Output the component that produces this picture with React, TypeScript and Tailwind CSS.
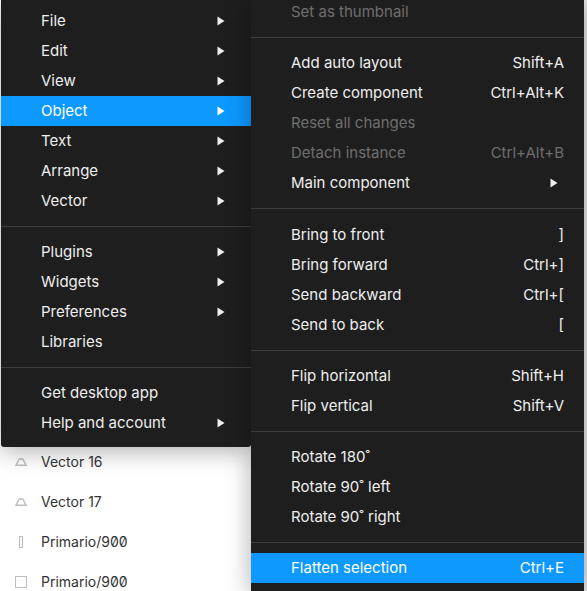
import { ReactNode } from "react";

type Item = { label: ReactNode; hint?: string; sub?: boolean; off?: boolean; active?: boolean };

const fileMenu: Item[][] = [
  [
    { label: "File", sub: true },
    { label: "Edit", sub: true },
    { label: "View", sub: true },
    { label: "Object", sub: true, active: true },
    { label: "Text", sub: true },
    { label: "Arrange", sub: true },
    { label: "Vector", sub: true },
  ],
  [
    { label: "Plugins", sub: true },
    { label: "Widgets", sub: true },
    { label: "Preferences", sub: true },
    { label: "Libraries" },
  ],
  [{ label: "Get desktop app" }, { label: "Help and account", sub: true }],
];

const objectMenu: Item[][] = [
  [{ label: "Set as thumbnail", off: true }],
  [
    { label: "Add auto layout", hint: "Shift+A" },
    { label: "Create component", hint: "Ctrl+Alt+K" },
    { label: "Reset all changes", off: true },
    { label: "Detach instance", hint: "Ctrl+Alt+B", off: true },
    { label: "Main component", sub: true },
  ],
  [
    { label: "Bring to front", hint: "]" },
    { label: "Bring forward", hint: "Ctrl+]" },
    { label: "Send backward", hint: "Ctrl+[" },
    { label: "Send to back", hint: "[" },
  ],
  [
    { label: "Flip horizontal", hint: "Shift+H" },
    { label: "Flip vertical", hint: "Shift+V" },
  ],
  [
    { label: "Rotate 180˚" },
    { label: "Rotate 90˚ left" },
    { label: "Rotate 90˚ right" },
  ],
  [{ label: "Flatten selection", hint: "Ctrl+E", active: true }],
];

const layers = [
  { name: "Vector 16", icon: "vector" },
  { name: "Vector 17", icon: "vector" },
  { name: "Primario/900", icon: "bar" },
  { name: "Primario/900", icon: "square" },
];

function Arrow() {
  return (
    <svg width="8" height="10" viewBox="0 0 8 10" className="mr-[6px] shrink-0">
      <path d="M0.5 0.5 L7.5 5 L0.5 9.5 Z" fill="currentColor" />
    </svg>
  );
}

function LayerIcon({ type }: { type: string }) {
  if (type === "vector") {
    return (
      <svg width="12" height="8" viewBox="0 0 12 8" fill="none" stroke="#bdbdbd" strokeWidth="1.4">
        <path d="M4.3 1 H7.7 L11 7.2 H1 Z" />
      </svg>
    );
  }
  if (type === "bar") return <div className="ml-1 h-3 w-1 border border-[#bdbdbd]" />;
  return <div className="size-3 border border-[#bdbdbd]" />;
}

function Row({ item }: { item: Item }) {
  const color = item.active
    ? "bg-[#0d99ff] text-white"
    : item.off
      ? "text-[#6e6e6e]"
      : "text-[#eeeeee]";
  return (
    <div className={`flex h-[30px] items-center justify-between pr-5 pl-10 ${color}`}>
      <span>{item.label}</span>
      {item.hint && <span>{item.hint}</span>}
      {item.sub && <Arrow />}
    </div>
  );
}

function Menu({ groups, looseGroup }: { groups: Item[][]; looseGroup?: number }) {
  return (
    <>
      {groups.map((rows, i) => (
        <div key={i}>
          {i > 0 && (
            <div className={`mt-[10px] h-px bg-[#3d3d3d] ${i === looseGroup ? "mb-[11px]" : "mb-[10px]"}`} />
          )}
          {rows.map((item, j) => (
            <Row key={j} item={item} />
          ))}
        </div>
      ))}
    </>
  );
}

export default function App() {
  return (
    <div className="flex h-[591px] w-[587px] overflow-hidden bg-white font-['Inter',sans-serif] text-[15px] leading-5">
      <div className="w-[251px] shrink-0">
        <div className="relative z-10 ml-px rounded-b-[3px] bg-[#1e1e1e] pt-[6px] pb-[9px] shadow-[0_4px_24px_rgba(0,0,0,0.32)]">
          <Menu groups={fileMenu} />
        </div>
        <div className="-mt-[5px] text-sm slashed-zero text-[#333333]">
          {layers.map((l, i) => (
            <div key={i} className="flex h-10 items-center">
              <div className="w-[41px] pl-[15px]">
                <LayerIcon type={l.icon} />
              </div>
              <span>{l.name}</span>
            </div>
          ))}
        </div>
      </div>
      <div className="relative z-20 -mt-[3px] h-[594px] w-[333px] shrink-0 bg-[#1e1e1e] shadow-[0_4px_24px_rgba(0,0,0,0.32)]">
        <Menu groups={objectMenu} looseGroup={2} />
      </div>
      <div className="w-[3px] shrink-0 bg-[#e8e8e8]" />
    </div>
  );
}
